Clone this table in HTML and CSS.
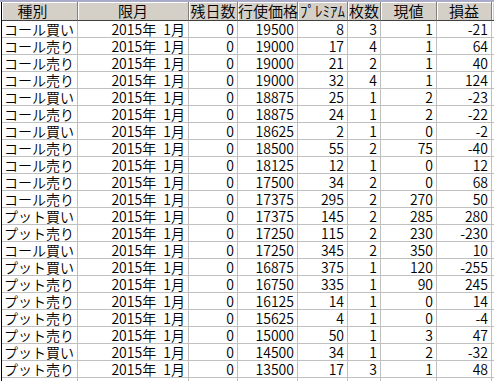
FILE: index.html
```html
<!DOCTYPE html>
<html lang="ja">
<head>
<meta charset="utf-8">
<title>ポジション一覧</title>
<link rel="stylesheet" href="styles.css">
</head>
<body>
<div class="band"></div>
<div class="frame">
  <div class="grid">
    <div class="hd hd-first">種別</div><div class="hd">限月</div><div class="hd">残日数</div><div class="hd">行使価格</div><div class="hd">ﾌﾟﾚﾐｱﾑ</div><div class="hd">枚数</div><div class="hd">現値</div><div class="hd">損益</div><div class="hd"></div>

    <div class="c name">コール買い</div><div class="c month">2015年 1月</div><div class="c">0</div><div class="c">19500</div><div class="c">8</div><div class="c">3</div><div class="c">1</div><div class="c">-21</div><div class="c"></div>
    <div class="c name">コール売り</div><div class="c month">2015年 1月</div><div class="c">0</div><div class="c">19000</div><div class="c">17</div><div class="c">4</div><div class="c">1</div><div class="c">64</div><div class="c"></div>
    <div class="c name">コール売り</div><div class="c month">2015年 1月</div><div class="c">0</div><div class="c">19000</div><div class="c">21</div><div class="c">2</div><div class="c">1</div><div class="c">40</div><div class="c"></div>
    <div class="c name">コール売り</div><div class="c month">2015年 1月</div><div class="c">0</div><div class="c">19000</div><div class="c">32</div><div class="c">4</div><div class="c">1</div><div class="c">124</div><div class="c"></div>
    <div class="c name">コール買い</div><div class="c month">2015年 1月</div><div class="c">0</div><div class="c">18875</div><div class="c">25</div><div class="c">1</div><div class="c">2</div><div class="c">-23</div><div class="c"></div>
    <div class="c name">コール売り</div><div class="c month">2015年 1月</div><div class="c">0</div><div class="c">18875</div><div class="c">24</div><div class="c">1</div><div class="c">2</div><div class="c">-22</div><div class="c"></div>
    <div class="c name">コール買い</div><div class="c month">2015年 1月</div><div class="c">0</div><div class="c">18625</div><div class="c">2</div><div class="c">1</div><div class="c">0</div><div class="c">-2</div><div class="c"></div>
    <div class="c name">コール売り</div><div class="c month">2015年 1月</div><div class="c">0</div><div class="c">18500</div><div class="c">55</div><div class="c">2</div><div class="c">75</div><div class="c">-40</div><div class="c"></div>
    <div class="c name">コール売り</div><div class="c month">2015年 1月</div><div class="c">0</div><div class="c">18125</div><div class="c">12</div><div class="c">1</div><div class="c">0</div><div class="c">12</div><div class="c"></div>
    <div class="c name">コール売り</div><div class="c month">2015年 1月</div><div class="c">0</div><div class="c">17500</div><div class="c">34</div><div class="c">2</div><div class="c">0</div><div class="c">68</div><div class="c"></div>
    <div class="c name">コール売り</div><div class="c month">2015年 1月</div><div class="c">0</div><div class="c">17375</div><div class="c">295</div><div class="c">2</div><div class="c">270</div><div class="c">50</div><div class="c"></div>
    <div class="c name">プット買い</div><div class="c month">2015年 1月</div><div class="c">0</div><div class="c">17375</div><div class="c">145</div><div class="c">2</div><div class="c">285</div><div class="c">280</div><div class="c"></div>
    <div class="c name">プット売り</div><div class="c month">2015年 1月</div><div class="c">0</div><div class="c">17250</div><div class="c">115</div><div class="c">2</div><div class="c">230</div><div class="c">-230</div><div class="c"></div>
    <div class="c name">コール買い</div><div class="c month">2015年 1月</div><div class="c">0</div><div class="c">17250</div><div class="c">345</div><div class="c">2</div><div class="c">350</div><div class="c">10</div><div class="c"></div>
    <div class="c name">プット買い</div><div class="c month">2015年 1月</div><div class="c">0</div><div class="c">16875</div><div class="c">375</div><div class="c">1</div><div class="c">120</div><div class="c">-255</div><div class="c"></div>
    <div class="c name">プット売り</div><div class="c month">2015年 1月</div><div class="c">0</div><div class="c">16750</div><div class="c">335</div><div class="c">1</div><div class="c">90</div><div class="c">245</div><div class="c"></div>
    <div class="c name">プット売り</div><div class="c month">2015年 1月</div><div class="c">0</div><div class="c">16125</div><div class="c">14</div><div class="c">1</div><div class="c">0</div><div class="c">14</div><div class="c"></div>
    <div class="c name">プット売り</div><div class="c month">2015年 1月</div><div class="c">0</div><div class="c">15625</div><div class="c">4</div><div class="c">1</div><div class="c">0</div><div class="c">-4</div><div class="c"></div>
    <div class="c name">プット売り</div><div class="c month">2015年 1月</div><div class="c">0</div><div class="c">15000</div><div class="c">50</div><div class="c">1</div><div class="c">3</div><div class="c">47</div><div class="c"></div>
    <div class="c name">プット買い</div><div class="c month">2015年 1月</div><div class="c">0</div><div class="c">14500</div><div class="c">34</div><div class="c">1</div><div class="c">2</div><div class="c">-32</div><div class="c"></div>
    <div class="c name">プット売り</div><div class="c month">2015年 1月</div><div class="c">0</div><div class="c">13500</div><div class="c">17</div><div class="c">3</div><div class="c">1</div><div class="c">48</div><div class="c"></div>
    <div class="c"></div><div class="c"></div><div class="c"></div><div class="c"></div><div class="c"></div><div class="c"></div><div class="c"></div><div class="c"></div><div class="c"></div>
  </div>
</div>
</body>
</html>
```
FILE: styles.css
```css
html, body {
  margin: 0;
  padding: 0;
  background: #ffffff;
  overflow: hidden;
}

.band {
  height: 2px;
  background: #a9abc9;
}

.frame {
  margin-left: 1px;
  border-left: 1px solid #000000;
  height: 379px;
  overflow: hidden;
  font-family: "Noto Sans CJK JP", "Noto Sans", sans-serif;
  font-size: 14px;
  font-weight: 350;
  color: #000000;
}

.grid {
  display: grid;
  grid-template-columns: 76px 111px 49px 60px 50px 33px 56px 55px 40px;
  grid-template-rows: 19px;
  grid-auto-rows: 17px;
  width: 530px;
}

.hd {
  box-sizing: border-box;
  background: #d4d0c8;
  border-right: 1px solid #808080;
  border-bottom: 1px solid #404040;
  box-shadow: inset 1px 1px 0 #ffffff;
  text-align: center;
  font-size: 15px;
  line-height: 18px;
  white-space: nowrap;
}

.hd-first {
  padding-right: 14px;
}

.c {
  box-sizing: border-box;
  border-right: 1px solid #c0c0c0;
  border-bottom: 1px solid #c0c0c0;
  line-height: 16px;
  padding-right: 3px;
  text-align: right;
  white-space: nowrap;
}

.name {
  text-align: left;
  padding-left: 2px;
  padding-right: 0;
}

.month {
  word-spacing: 4px;
}
```
